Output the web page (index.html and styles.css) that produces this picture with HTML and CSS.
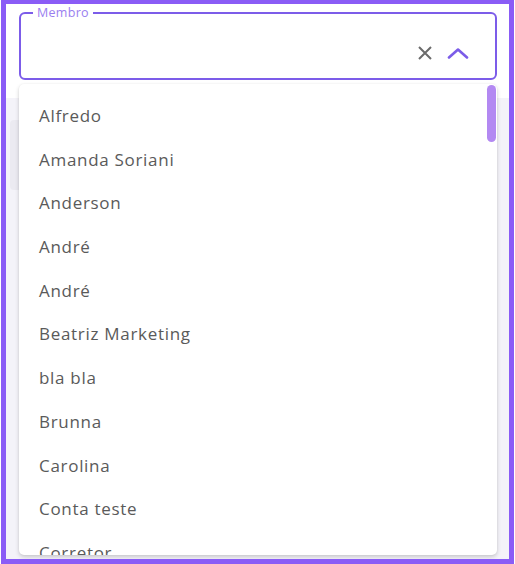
FILE: index.html
```html
<!DOCTYPE html>
<html lang="pt">
<head>
<meta charset="utf-8">
<link rel="stylesheet" href="styles.css">
</head>
<body>
<div class="frame">
  <div class="backdrop">
    <div class="ghost-box"></div>
  </div>
  <div class="field">
    <fieldset class="outline">
      <legend class="label">Membro</legend>
    </fieldset>
    <div class="actions">
      <svg class="icon-clear" width="16" height="16" viewBox="0 0 16 16"><path d="M2 2L14 14M14 2L2 14" stroke="#6b6b6b" stroke-width="2" fill="none"/></svg>
      <svg class="icon-chevron" width="22" height="12" viewBox="0 0 22 12"><path d="M2 10.5L11 2.5L20 10.5" stroke="#7b5ce8" stroke-width="2.6" fill="none" stroke-linecap="round" stroke-linejoin="round"/></svg>
    </div>
  </div>
  <div class="menu">
    <ul class="list">
      <li>Alfredo</li>
      <li>Amanda Soriani</li>
      <li>Anderson</li>
      <li>André</li>
      <li>André</li>
      <li>Beatriz Marketing</li>
      <li>bla bla</li>
      <li>Brunna</li>
      <li>Carolina</li>
      <li>Conta teste</li>
      <li>Corretor</li>
    </ul>
    <div class="scroll-thumb"></div>
  </div>
</div>
</body>
</html>
```
FILE: styles.css
```css
html, body {
  margin: 0;
  padding: 0;
  background: #ffffff;
}
body {
  width: 515px;
  height: 564px;
  overflow: hidden;
  font-family: "Open Sans", "Lato", sans-serif;
}
.frame {
  position: relative;
  margin-left: 1px;
  width: 503px;
  height: 555px;
  border: 5px solid #8a5cf6;
  border-top-width: 4px;
  background: #ffffff;
  overflow: hidden;
}
.backdrop {
  position: absolute;
  left: 0;
  right: 0;
  top: 94px;
  bottom: 0;
  background: #f4f3f9;
}
.ghost-box {
  position: absolute;
  left: 4px;
  width: 40px;
  top: 22px;
  height: 70px;
  background: #ebeaf1;
  border-radius: 4px;
}
.field {
  position: absolute;
  left: 13px;
  top: 2px;
  width: 478px;
  height: 74px;
}
.outline {
  position: absolute;
  left: 0;
  right: 0;
  top: 0;
  bottom: 0;
  margin: 0;
  padding: 0 12px;
  border: 2px solid #7c5ce9;
  border-radius: 6px;
}
.label {
  padding: 0 4px;
  font-size: 12.5px;
  line-height: 14px;
  color: #9a7ef0;
  letter-spacing: 0.3px;
}
.actions {
  position: absolute;
  right: 28px;
  top: 38px;
  display: flex;
  align-items: center;
  gap: 14px;
}
.icon-clear {
  margin-top: 1px;
}
.menu {
  position: absolute;
  left: 13px;
  top: 80px;
  width: 478px;
  height: 471px;
  background: #ffffff;
  border-radius: 5px;
  box-shadow: 0 2px 4px rgba(0,0,0,0.18), 0 0 2px rgba(0,0,0,0.06);
  overflow: hidden;
}
.list {
  list-style: none;
  margin: 0;
  padding: 10px 0 0;
}
.list li {
  height: 43.7px;
  line-height: 43.7px;
  padding-left: 20px;
  font-size: 17px;
  letter-spacing: 0.7px;
  color: #5a5a5a;
}
.scroll-thumb {
  position: absolute;
  right: 1px;
  top: 1px;
  width: 9px;
  height: 57px;
  border-radius: 5px;
  background: #b389f2;
}
```
